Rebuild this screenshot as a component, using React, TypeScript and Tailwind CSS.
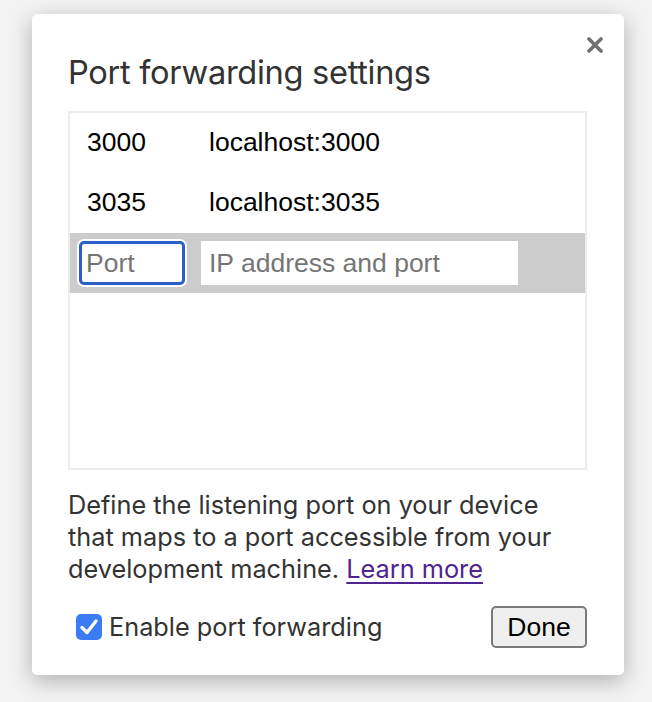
import React, { useState } from "react";

const ROWS = [
  { port: "3000", host: "localhost:3000" },
  { port: "3035", host: "localhost:3035" },
];

export default function App() {
  const [enabled, setEnabled] = useState(true);

  return (
    <div className="min-h-screen bg-[#f3f3f3] pt-[14px] pl-[32px]">
      <div className="relative w-[592px] h-[661px] bg-white rounded-[5px] shadow-[0_6px_22px_rgba(0,0,0,0.28)] pl-[36px] pt-[38px] font-['Inter',sans-serif]">
        {/* close */}
        <button className="absolute right-[21px] top-[23px] w-4 h-4 text-[#707070]">
          <svg viewBox="0 0 16 16" className="w-4 h-4">
            <path d="M2 2 L14 14 M14 2 L2 14" stroke="currentColor" strokeWidth="3.6" strokeLinecap="round" />
          </svg>
        </button>

        <h1 className="h-[40px] leading-[40px] text-[32.6px] text-[#333] tracking-[-0.3px]">Port forwarding settings</h1>

        <div className="mt-[19px] w-[519px] h-[359px] border-2 border-[#ececec] font-['Liberation_Sans',Arial,sans-serif] text-[26.5px] text-black">
          {ROWS.map((r) => (
            <div key={r.port} className="h-[60px] flex items-center pl-[17px]">
              <span className="w-[122px]">{r.port}</span>
              <span>{r.host}</span>
            </div>
          ))}
          <div className="h-[60px] bg-[#cccccc] flex items-center pl-[9px] gap-4">
            <input
              autoFocus
              placeholder="Port"
              className="w-[106px] h-[44px] rounded-[5px] border-[3px] border-[#2c5fc7] bg-white px-[4px] outline-none shadow-[0_0_0_2px_#ffffff] placeholder:text-[#757575] caret-black"
            />
            <input
              placeholder="IP address and port"
              className="w-[317px] h-[44px] bg-white px-[8px] outline-none placeholder:text-[#757575]"
            />
          </div>
        </div>

        <p className="mt-[19px] w-[490px] text-[25.3px] leading-[32px] text-[#333]">
          Define the listening port on your device that maps to a port accessible from your development machine.{" "}
          <a href="#" className="text-[#4f2390] underline underline-offset-[4px]">Learn more</a>
        </p>

        <div className="mt-[21px] w-[519px] flex items-center justify-between">
          <label className="flex items-center gap-[7px] pl-[8px] text-[25.3px] text-[#333]">
            <span
              onClick={() => setEnabled(!enabled)}
              className={`w-[26px] h-[26px] rounded-[5px] flex items-center justify-center ${enabled ? "bg-[#3b7cf5]" : "bg-white border border-[#999]"}`}
            >
              {enabled && (
                <svg viewBox="0 0 26 26" className="w-[26px] h-[26px]">
                  <path d="M6 13.5 L11 18.5 L20 7" fill="none" stroke="white" strokeWidth="3.4" strokeLinecap="round" strokeLinejoin="round" />
                </svg>
              )}
            </span>
            Enable port forwarding
          </label>
          <button className="w-[96px] h-[42px] bg-[#efefef] border-2 border-[#7a7a7a] rounded-[5px] font-['Liberation_Sans',Arial,sans-serif] text-[26.5px] text-black">
            Done
          </button>
        </div>
      </div>
    </div>
  );
}
